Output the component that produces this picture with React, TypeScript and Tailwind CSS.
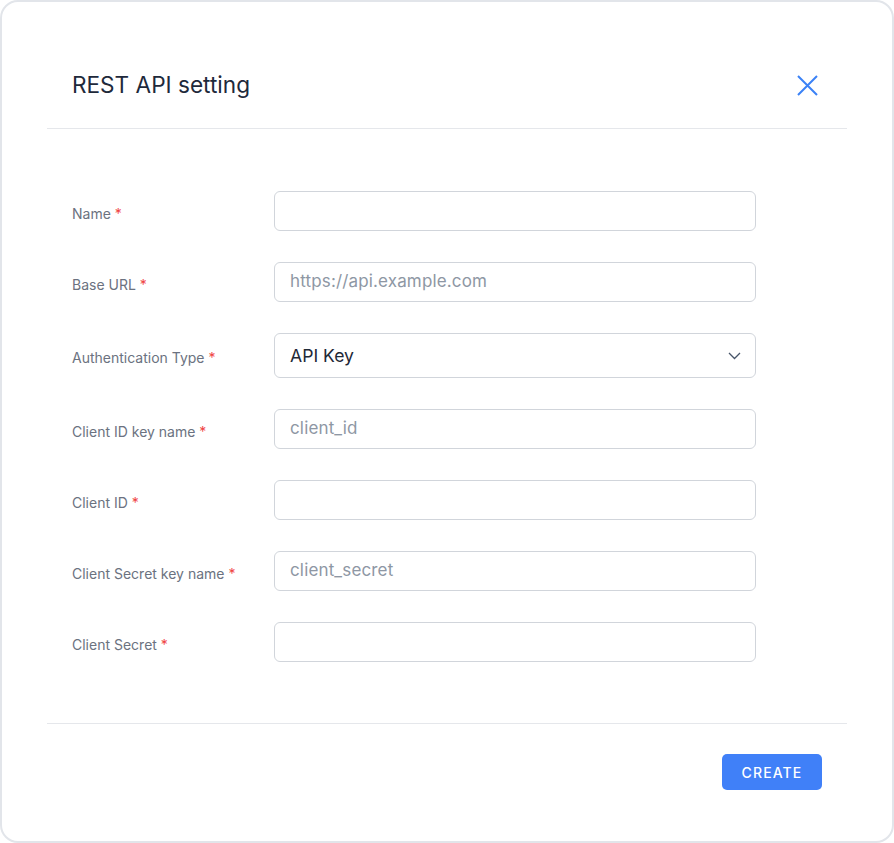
import React from "react";

const fields: { label: string; placeholder?: string; select?: boolean; value?: string }[] = [
  { label: "Name" },
  { label: "Base URL", placeholder: "https://api.example.com" },
  { label: "Authentication Type", select: true, value: "API Key" },
  { label: "Client ID key name", placeholder: "client_id" },
  { label: "Client ID" },
  { label: "Client Secret key name", placeholder: "client_secret" },
  { label: "Client Secret" },
];

export default function App() {
  return (
    <div className="w-[894px] h-[843px] bg-white" style={{ fontFamily: "Inter, 'Noto Sans', sans-serif" }}>
      <div className="w-full h-full border-2 border-[#e2e5ea] rounded-[18px] bg-white px-[45px] flex flex-col">
        <div className="h-[127px] flex items-center justify-between pl-[25px] pr-[29px] pt-[40px] border-b border-[#e5e7eb]">
          <h1 className="text-[22.6px] text-[#1e293b] font-normal">REST API setting</h1>
          <svg width="21" height="21" viewBox="0 0 21 21" fill="none" stroke="#3b82f6" strokeWidth="2">
            <path d="M1 1 L20 20 M20 1 L1 20" />
          </svg>
        </div>
        <div className="pt-[62px] pb-[61px] pl-[25px] pr-[91px] flex flex-col gap-[31px] border-b border-[#e5e7eb]">
          {fields.map((f) => (
            <div key={f.label} className="flex items-center">
              <label className="w-[202px] shrink-0 text-[14px] text-[#6b7280] pt-[4px]">
                {f.label} <span className="text-[#ef4444]">*</span>
              </label>
              {f.select ? (
                <div className="flex-1 h-[45px] border border-[#d1d5db] rounded-[6px] flex items-center justify-between pl-[15px] pr-[14px]">
                  <span className="text-[17.6px] text-[#1f2937] pt-[2px]">{f.value}</span>
                  <svg width="13" height="8" viewBox="0 0 13 8" fill="none" stroke="#475569" strokeWidth="1.3">
                    <path d="M1 1 L6.5 6.5 L12 1" />
                  </svg>
                </div>
              ) : (
                <div className="flex-1 h-[40px] border border-[#d1d5db] rounded-[6px] flex items-center pl-[15px]">
                  <span className="text-[17px] tracking-[0.15px] text-[#8e97a4]">{f.placeholder ?? ""}</span>
                </div>
              )}
            </div>
          ))}
        </div>
        <div className="flex justify-end pr-[25px] pt-[30px]">
          <button className="w-[100px] h-[36px] bg-[#4080f8] rounded-[5px] text-white text-[14px] font-medium tracking-[0.08em]">
            CREATE
          </button>
        </div>
      </div>
    </div>
  );
}
